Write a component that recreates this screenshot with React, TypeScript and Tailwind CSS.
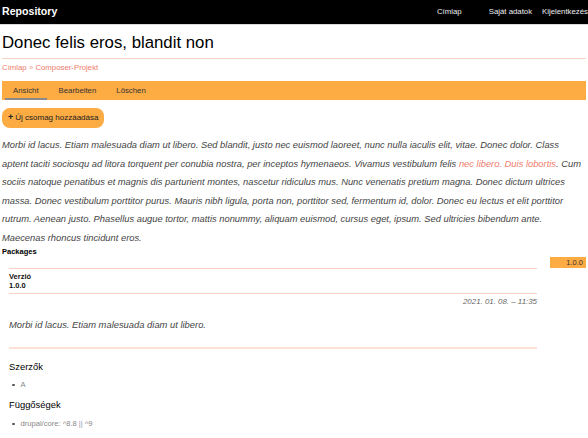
const linkColor = 'text-[#ee7c6c]';

export default function App() {
	return (
		<div className="min-h-[438px] bg-white font-['Liberation_Sans',Arial,sans-serif] text-[#222]">
			{/* Top bar */}
			<header className="flex h-[25px] items-center justify-between border-b border-[#d9d9d9] bg-black pl-[2px] text-white">
				<span className="text-[10.6px] font-bold">Repository</span>
				<nav className="flex items-center text-[7.8px] text-[#eeeeee]">
					<span className="mr-[27px]">Címlap</span>
					<span className="mr-[10px]">Saját adatok</span>
					<span>Kijelentkezés</span>
				</nav>
			</header>

			<div className="px-[2px]">
				<h1 className="border-b border-[#f9d2c4] pb-[5px] pt-[8px] text-[16.8px] leading-[20px] text-black">
					Donec felis eros, blandit non
				</h1>

				<div className={`pt-[4px] text-[7.8px] leading-[10px] ${linkColor}`}>
					Címlap <span className="text-[#f2a196]">»</span> Composer-Projekt
				</div>

				{/* Tabs */}
				<div className="mt-[8px] flex h-[19px] items-stretch gap-[4px] bg-[#fdab43] pl-[3px] text-[7.8px] text-[#333]">
					<span className="flex items-center border-b-2 border-[#8a8a8a] px-[8px] pt-[2px]">Ansicht</span>
					<span className="flex items-center px-[8px]">Bearbeiten</span>
					<span className="flex items-center px-[8px]">Löschen</span>
				</div>

				<button className="mt-[8px] flex h-[20px] items-center rounded-[8px] bg-[#fdab43] px-[6px] text-[8px] text-[#222]">
					<span className="mr-[2px] text-[9px] font-bold">+</span>Új csomag hozzáadása
				</button>

				<p className="mt-[8px] text-[9.35px] italic leading-[18.5px] text-[#444]">
					Morbi id lacus. Etiam malesuada diam ut libero. Sed blandit, justo nec euismod laoreet, nunc nulla iaculis elit, vitae. Donec dolor. Class
					aptent taciti sociosqu ad litora torquent per conubia nostra, per inceptos hymenaeos. Vivamus vestibulum felis{' '}
					<a className={linkColor}>nec libero. Duis lobortis</a>. Cum sociis natoque penatibus et magnis dis parturient montes, nascetur ridiculus mus. Nunc venenatis pretium magna. Donec dictum ultrices
					massa. Donec vestibulum porttitor purus. Mauris nibh ligula, porta non, porttitor sed, fermentum id, dolor. Donec eu lectus et elit porttitor
					rutrum. Aenean justo. Phasellus augue tortor, mattis nonummy, aliquam euismod, cursus eget, ipsum. Sed ultricies bibendum ante.
					Maecenas rhoncus tincidunt eros.
				</p>

				{/* Packages */}
				<div className="flex items-start justify-between">
					<div className="w-[535px]">
						<div className="text-[7.5px] font-bold leading-[10px] text-black">Packages</div>
						<div className="ml-[7px] mt-[11px]">
							<div className="border-y border-[#f9d2c4] py-[3px] text-[7.5px] font-bold leading-[9px] text-[#111]">
								<div>Verzió</div>
								<div>1.0.0</div>
							</div>
							<div className="pt-[3px] text-right text-[7.9px] italic leading-[10px] text-[#666]">2021. 01. 08. – 11:35</div>
							<p className="mt-[12px] text-[9.4px] italic leading-[12px] text-[#444]">Morbi id lacus. Etiam malesuada diam ut libero.</p>
							<div className="mt-[16px] h-[2px] bg-[#fbe0d6]"></div>
							<h3 className="mt-[12px] text-[9.4px] leading-[12px] text-black">Szerzők</h3>
							<ul className="mt-[7px] text-[7.6px] leading-[10px] text-[#888]">
								<li className="flex items-center">
									<span className="ml-[3px] mr-[6px] h-[2.5px] w-[2.5px] rounded-full bg-[#555]"></span>A
								</li>
							</ul>
							<h3 className="mt-[9px] text-[9.4px] leading-[12px] text-black">Függőségek</h3>
							<ul className="mt-[8px] text-[7.6px] leading-[10px] text-[#888]">
								<li className="flex items-center">
									<span className="ml-[3px] mr-[6px] h-[2.5px] w-[2.5px] rounded-full bg-[#555]"></span>drupal/core: ^8.8
									<span className="mx-[2px] text-[#99a]">||</span>^9
								</li>
							</ul>
						</div>
					</div>
					<div className="mt-[10px] w-[36px] bg-[#fdab43] pr-[3px] text-right text-[7.5px] leading-[11px] text-[#333]">1.0.0</div>
				</div>
			</div>
		</div>
	);
}
